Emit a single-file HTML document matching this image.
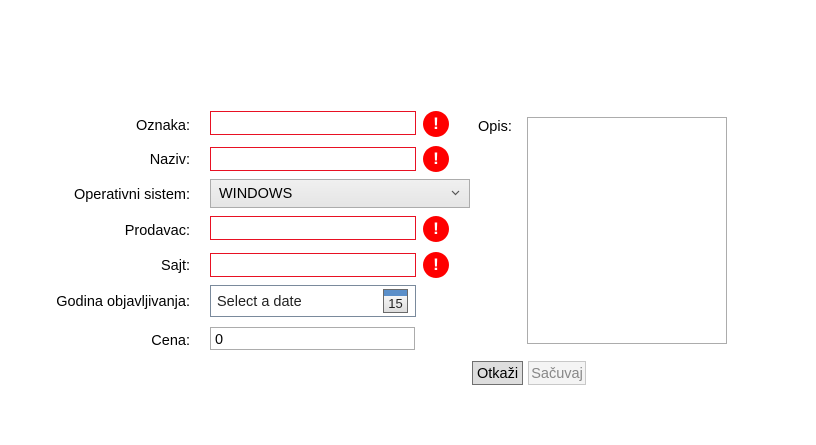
<!DOCTYPE html>
<html><head><meta charset="utf-8"><style>
body{margin:0;width:816px;height:445px;background:#fff;position:relative;font-family:"Liberation Sans",sans-serif;font-size:14.5px;color:#000;overflow:hidden}
.a{position:absolute;box-sizing:border-box}
.l{position:absolute;right:626px;white-space:nowrap}
.tb{border:1px solid #e81123;background:#fff}
.err{width:26px;height:26px;border-radius:50%;background:#f00;color:#fff;font-weight:bold;font-size:17px;text-align:center;line-height:26px}
</style></head><body>
<div class="l" style="top:118px">Oznaka:</div>
<div class="l" style="top:152px">Naziv:</div>
<div class="l" style="top:187px">Operativni sistem:</div>
<div class="l" style="top:223px">Prodavac:</div>
<div class="l" style="top:258px">Sajt:</div>
<div class="l" style="top:294px">Godina objavljivanja:</div>
<div class="l" style="top:333px">Cena:</div>

<div class="a tb" style="left:210px;top:111px;width:206px;height:24px"></div>
<div class="a err" style="left:423px;top:111px">!</div>
<div class="a tb" style="left:210px;top:147px;width:206px;height:24px"></div>
<div class="a err" style="left:423px;top:146px">!</div>
<div class="a" style="left:210px;top:179px;width:260px;height:29px;border:1px solid #acacac;background:linear-gradient(#f0f0f0,#e5e5e5);padding:6px 0 0 8px">WINDOWS<svg style="position:absolute;right:9px;top:10px" width="9" height="6" viewBox="0 0 9 6"><path d="M1 1l3.5 3.5L8 1" fill="none" stroke="#555" stroke-width="1.2"/></svg></div>
<div class="a tb" style="left:210px;top:216px;width:206px;height:24px"></div>
<div class="a err" style="left:423px;top:216px">!</div>
<div class="a tb" style="left:210px;top:253px;width:206px;height:24px"></div>
<div class="a err" style="left:423px;top:252px">!</div>
<div class="a" style="left:210px;top:285px;width:206px;height:32px;border:1px solid #7a8a9c;padding:8px 0 0 6px;color:#222">Select a date
<div class="a" style="left:172px;top:3px;width:25px;height:24px;border:1px solid #6a6a6a;background:linear-gradient(#fff,#ddd)"><div style="height:6px;background:#5b8fc9"></div><div style="font-size:13px;text-align:center;line-height:16px;color:#222">15</div></div></div>
<div class="a" style="left:210px;top:327px;width:205px;height:23px;border:1px solid #acacac;padding:4px 0 0 4px">0</div>

<div class="a" style="left:478px;top:119px">Opis:</div>
<div class="a" style="left:527px;top:117px;width:200px;height:227px;border:1px solid #acacac"></div>
<div class="a" style="left:472px;top:361px;width:51px;height:24px;border:1px solid #707070;background:#ddd;text-align:center;line-height:24px">Otkaži</div>
<div class="a" style="left:528px;top:361px;width:58px;height:24px;border:1px solid #c8c8c8;background:#f4f4f4;color:#888;text-align:center;line-height:24px">Sačuvaj</div>
</body></html>
